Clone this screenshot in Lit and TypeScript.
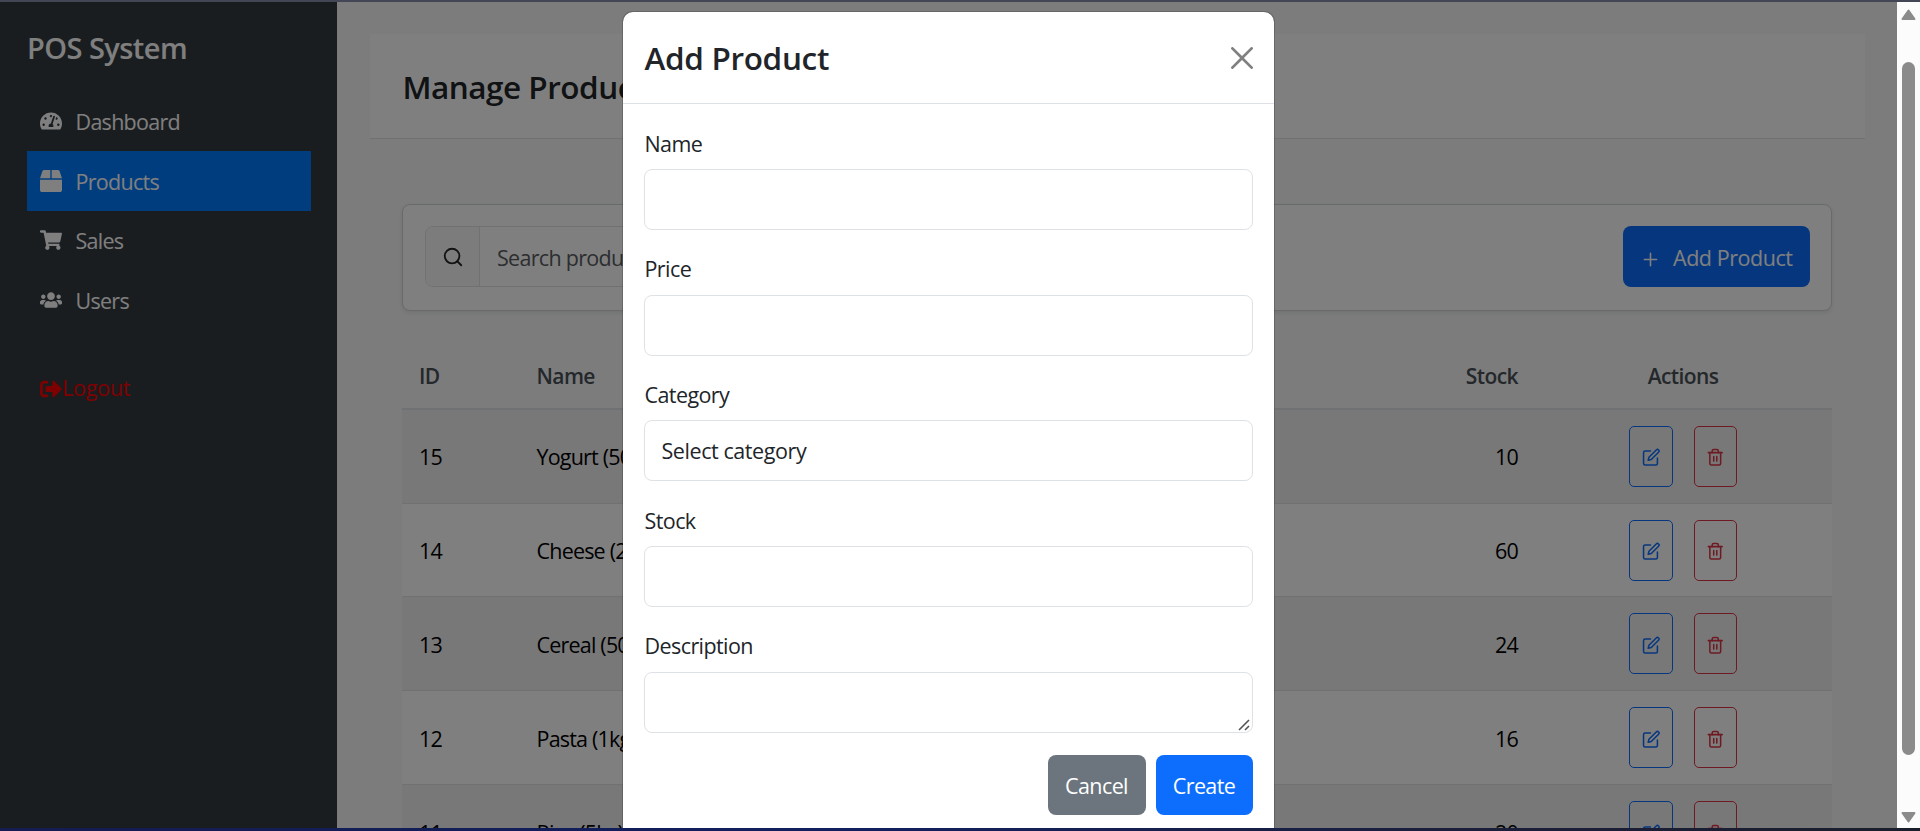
import { LitElement, html, svg, css } from "lit";
import { classMap } from "lit/directives/class-map.js";

const NAV = [
  {
    label: "Dashboard",
    box: "0 0 576 512",
    path: "M288 32C128.94 32 0 160.94 0 320c0 52.8 14.25 102.26 39.06 144.8 5.61 9.62 16.3 15.2 27.44 15.2h443c11.14 0 21.83-5.58 27.44-15.2C561.75 422.26 576 372.8 576 320c0-159.06-128.94-288-288-288zm0 64c14.71 0 26.58 10.13 30.32 23.65-1.11 2.26-2.64 4.23-3.45 6.67l-9.22 27.67c-5.13 3.49-10.97 6.01-17.64 6.01-17.67 0-32-14.33-32-32S270.33 96 288 96zM96 384c-17.67 0-32-14.33-32-32s14.33-32 32-32 32 14.33 32 32-14.33 32-32 32zm48-160c-17.67 0-32-14.33-32-32s14.33-32 32-32 32 14.33 32 32-14.33 32-32 32zm246.77-72.41l-61.33 184C343.13 347.33 352 364.54 352 384c0 11.72-3.38 22.55-8.88 32H232.88c-5.5-9.45-8.88-20.28-8.88-32 0-33.94 26.5-61.43 59.9-63.59l61.34-184.01c4.17-12.56 17.73-19.45 30.36-15.17 12.57 4.19 19.35 17.79 15.17 30.36zm14.66 57.2l15.52-46.55c3.47-1.29 7.13-2.23 11.05-2.23 17.67 0 32 14.33 32 32s-14.33 32-32 32c-11.38-.01-20.89-6.28-26.57-15.22zM480 384c-17.67 0-32-14.33-32-32s14.33-32 32-32 32 14.33 32 32-14.33 32-32 32z",
  },
  {
    label: "Products",
    active: true,
    box: "0 0 512 512",
    path: "M509.5 184.6L458.9 32.8C452.4 13.2 434.1 0 413.4 0H272v192h238.7c-.4-2.5-.4-5-1.2-7.4zM240 0H98.6c-20.7 0-39 13.2-45.5 32.8L2.5 184.6c-.8 2.4-.8 4.9-1.2 7.4H240V0zM0 224v240c0 26.5 21.5 48 48 48h416c26.5 0 48-21.5 48-48V224H0z",
  },
  {
    label: "Sales",
    box: "0 0 576 512",
    path: "M528.12 301.319l47.273-208C578.806 78.301 567.391 64 551.99 64H159.208l-9.166-44.81C147.758 8.021 137.93 0 126.529 0H24C10.745 0 0 10.745 0 24v16c0 13.255 10.745 24 24 24h69.883l70.248 343.435C147.325 417.1 136 435.222 136 456c0 30.928 25.072 56 56 56s56-25.072 56-56c0-15.674-6.447-29.835-16.824-40h209.647C430.447 426.165 424 440.326 424 456c0 30.928 25.072 56 56 56s56-25.072 56-56c0-22.172-12.888-41.332-31.579-50.405l5.517-24.276c3.413-15.018-8.002-29.319-23.403-29.319H218.117l-6.545-32h293.145c11.206 0 20.92-7.754 23.403-18.681z",
  },
  {
    label: "Users",
    box: "0 0 640 512",
    path: "M96 224c35.3 0 64-28.7 64-64s-28.7-64-64-64-64 28.7-64 64 28.7 64 64 64zm448 0c35.3 0 64-28.7 64-64s-28.7-64-64-64-64 28.7-64 64 28.7 64 64 64zm32 32h-64c-17.6 0-33.5 7.1-45.1 18.6 40.3 22.1 68.9 62 75.1 109.4h66c17.7 0 32-14.3 32-32v-32c0-35.3-28.7-64-64-64zm-256 0c61.9 0 112-50.1 112-112S381.9 32 320 32 208 82.1 208 144s50.1 112 112 112zm76.8 32h-8.3c-20.8 10-43.9 16-68.5 16s-47.6-6-68.5-16h-8.3C179.6 288 128 339.6 128 403.2V432c0 26.5 21.5 48 48 48h288c26.5 0 48-21.5 48-48v-28.8c0-63.6-51.6-115.2-115.2-115.2zm-223.7-13.4C161.5 263.1 145.6 256 128 256H64c-35.3 0-64 28.7-64 64v32c0 17.7 14.3 32 32 32h65.9c6.3-47.4 34.9-87.3 75.2-109.4z",
  },
];

const SIGN_OUT =
  "M497 273L329 441c-15 15-41 4.5-41-17v-96H152c-13.3 0-24-10.7-24-24v-96c0-13.3 10.7-24 24-24h136V88c0-21.4 25.9-32 41-17l168 168c9.3 9.4 9.3 24.6 0 34zM192 436v-40c0-6.6-5.4-12-12-12H96c-17.7 0-32-14.3-32-32V160c0-17.7 14.3-32 32-32h84c6.6 0 12-5.4 12-12V76c0-6.6-5.4-12-12-12H96c-53 0-96 43-96 96v192c0 53 43 96 96 96h84c6.6 0 12-5.4 12-12z";

const ROWS = [
  { id: 15, name: "Yogurt (500g)", stock: 10 },
  { id: 14, name: "Cheese (200g)", stock: 60 },
  { id: 13, name: "Cereal (500g)", stock: 24 },
  { id: 12, name: "Pasta (1kg)", stock: 16 },
  { id: 11, name: "Rice (5kg)", stock: 20 },
];

const EDIT = svg`<path d="M11 4H4a2 2 0 0 0-2 2v14a2 2 0 0 0 2 2h14a2 2 0 0 0 2-2v-7"/><path d="M18.5 2.5a2.121 2.121 0 0 1 3 3L12 15l-4 1 1-4 9.5-9.5z"/>`;
const TRASH = svg`<path d="M3 6h18"/><path d="M19 6v14a2 2 0 0 1-2 2H7a2 2 0 0 1-2-2V6m3 0V4a2 2 0 0 1 2-2h4a2 2 0 0 1 2 2v2"/><path d="M10 11v6M14 11v6"/>`;

class AppSidebar extends LitElement {
  static styles = css`
    :host {
      box-sizing: border-box;
      width: 337px;
      flex: none;
      padding: 0 26px 0 27px;
      background: #343a40;
      color: #fff;
      font-size: 21.5px;
      letter-spacing: -0.72px;
    }
    .brand {
      height: 89.8px;
      line-height: 92px;
      font-size: 29px;
      font-weight: 600;
      letter-spacing: -0.55px;
    }
    .item {
      display: flex;
      align-items: center;
      height: 59.4px;
      padding-left: 13px;
      gap: 13.5px;
    }
    .item.active {
      background: #007bff;
    }
    .item span {
      padding-top: 1px;
    }
    .item svg {
      width: 22px;
      height: 22px;
      fill: currentColor;
    }
    .logout {
      margin-top: 28px;
      color: red;
      gap: 0;
      letter-spacing: -0.25px;
    }
    .logout svg {
      margin-top: 4px;
    }
  `;
  render() {
    return html`
      <div class="brand">POS System</div>
      ${NAV.map(
        (n) => html`<div class=${classMap({ item: true, active: !!n.active })}>
          <svg viewBox=${n.box}><path d=${n.path}></path></svg><span>${n.label}</span>
        </div>`
      )}
      <div class="item logout">
        <svg viewBox="0 0 512 512"><path d=${SIGN_OUT}></path></svg><span>Logout</span>
      </div>
    `;
  }
}
customElements.define("app-sidebar", AppSidebar);

class ProductPage extends LitElement {
  static styles = css`
    :host {
      box-sizing: border-box;
      flex: 1;
      min-width: 0;
      overflow: hidden;
      padding: 31.5px 32px 0 33px;
      background: #f8f9fa;
      color: #212529;
    }
    .heading {
      box-sizing: border-box;
      height: 105.5px;
      line-height: 106px;
      padding-left: 32.5px;
      background: #fff;
      border-bottom: 1px solid #dee2e6;
      font-size: 31.5px;
      font-weight: 600;
      letter-spacing: -0.5px;
    }
    .body {
      padding: 65px 33px 0 32px;
    }
    .card {
      box-sizing: border-box;
      display: flex;
      justify-content: space-between;
      height: 106.5px;
      padding: 21.4px 21px;
      background: #fff;
      border: 1px solid #d3d4d5;
      border-radius: 8px;
      box-shadow: 0 2px 5px rgba(0, 0, 0, 0.09);
    }
    .search {
      box-sizing: border-box;
      display: flex;
      width: 640px;
      height: 61px;
      margin-left: 1px;
      border: 1px solid #dee2e6;
      border-radius: 8px;
      overflow: hidden;
      letter-spacing: -0.7px;
    }
    .addon {
      display: grid;
      place-items: center;
      width: 53px;
      background: #f8f9fa;
      border-right: 1px solid #dee2e6;
    }
    .placeholder {
      padding-left: 17px;
      line-height: 62px;
      color: #595c5f;
    }
    .line {
      fill: none;
      stroke: currentColor;
      stroke-width: 2;
      stroke-linecap: round;
      stroke-linejoin: round;
    }
    .glass {
      width: 22px;
      height: 22px;
    }
    .add {
      display: flex;
      align-items: center;
      box-sizing: border-box;
      width: 187px;
      height: 61px;
      padding-left: 17px;
      gap: 12px;
      border-radius: 8px;
      background: #0d6efd;
      color: #fff;
      letter-spacing: -0.45px;
      white-space: nowrap;
    }
    .add span {
      padding-top: 1.5px;
    }
    .add svg {
      width: 21px;
      height: 21px;
      margin-top: 6px;
      stroke-width: 1.8;
    }
    .table {
      margin-top: 31.1px;
      letter-spacing: -0.8px;
      color: #000;
    }
    .row {
      box-sizing: border-box;
      display: grid;
      grid-template-columns: 117.5px 718.5px 1fr 314px;
      align-items: center;
      height: 93.95px;
      padding-left: 17px;
      border-bottom: 1px solid #dee2e6;
      background: #fff;
    }
    .row > span {
      padding-top: 1.5px;
    }
    .row.odd {
      background: #f1f1f2;
    }
    .row.head {
      height: 68px;
      border-bottom: 2px solid #dee2e6;
      background: #f8f9fa;
      color: #495057;
      font-weight: 600;
      font-size: 21px;
      letter-spacing: -0.6px;
    }
    .row.head > span {
      padding-top: 3px;
    }
    .stock {
      text-align: right;
    }
    .actions {
      display: flex;
      justify-content: center;
      gap: 21px;
      padding-left: 16px;
    }
    .btn {
      box-sizing: border-box;
      display: grid;
      place-items: center;
      width: 43.5px;
      height: 61px;
      padding-top: 3px;
      border: 1px solid;
      border-radius: 5px;
    }
    .btn svg {
      width: 18.5px;
      height: 18.5px;
    }
    .edit {
      color: #0d6efd;
    }
    .del {
      color: #dc3545;
    }
  `;
  render() {
    return html`
      <div class="heading">Manage Products</div>
      <div class="body">
        <div class="card">
          <div class="search">
            <div class="addon">
              <svg class="line glass" viewBox="0 0 24 24"><circle cx="11" cy="11" r="8"></circle><path d="M21 21l-4.35-4.35"></path></svg>
            </div>
            <div class="placeholder">Search products...</div>
          </div>
          <div class="add">
            <svg class="line" viewBox="0 0 24 24"><path d="M12 5v14M5 12h14"></path></svg><span>Add Product</span>
          </div>
        </div>
        <div class="table">
          <div class="row head">
            <span>ID</span><span>Name</span><span class="stock">Stock</span><span class="actions">Actions</span>
          </div>
          ${ROWS.map(
            (r, i) => html`<div class=${classMap({ row: true, odd: i % 2 === 0 })}>
              <span>${r.id}</span><span>${r.name}</span><span class="stock">${r.stock}</span>
              <div class="actions">
                <div class="btn edit"><svg class="line" viewBox="0 0 24 24">${EDIT}</svg></div>
                <div class="btn del"><svg class="line" viewBox="0 0 24 24">${TRASH}</svg></div>
              </div>
            </div>`
          )}
        </div>
      </div>
    `;
  }
}
customElements.define("product-page", ProductPage);

class ProductModal extends LitElement {
  static styles = css`
    :host {
      box-sizing: border-box;
      width: 653px;
      height: 840px;
      background: #fff;
      background-clip: padding-box;
      border: 1px solid rgba(0, 0, 0, 0.175);
      border-radius: 11px;
      color: #212529;
      letter-spacing: -0.58px;
    }
    .header {
      display: flex;
      align-items: center;
      justify-content: space-between;
      height: 91px;
      padding: 0 21.5px;
      border-bottom: 1px solid #dee2e6;
      font-size: 31.5px;
      font-weight: 600;
      letter-spacing: -0.33px;
    }
    .close {
      width: 22px;
      height: 22px;
      fill: #808080;
    }
    .form {
      padding: 21.5px 21.5px 0 21px;
    }
    .field {
      display: flex;
      flex-direction: column;
      gap: 9.6px;
      margin-bottom: 21.1px;
    }
    .label {
      height: 34px;
      line-height: 36px;
      padding-left: 0.5px;
    }
    .control {
      box-sizing: border-box;
      display: block;
      width: 100%;
      height: 61px;
      margin: 0;
      padding: 0 16.5px;
      line-height: 60px;
      border: 1px solid #dee2e6;
      border-radius: 8px;
      background: #fff;
      letter-spacing: -0.42px;
    }
    .area {
      display: flex;
      justify-content: flex-end;
      align-items: flex-end;
      padding: 0 2px 1px;
    }
    .grip {
      width: 12px;
      height: 12px;
      stroke: #555;
      stroke-width: 1.6;
    }
    .footer {
      display: flex;
      justify-content: flex-end;
      gap: 10px;
      padding-top: 0.6px;
    }
    .btn {
      width: 98px;
      height: 60.5px;
      line-height: 62px;
      border-radius: 8px;
      text-align: center;
      color: #fff;
      background: #6c757d;
      letter-spacing: -0.6px;
    }
    .primary {
      width: 97px;
      background: #0d6efd;
    }
  `;
  render() {
    return html`
      <div class="header">
        <span>Add Product</span>
        <svg class="close" viewBox="0 0 16 16"><path d="M.293.293a1 1 0 0 1 1.414 0L8 6.586 14.293.293a1 1 0 1 1 1.414 1.414L9.414 8l6.293 6.293a1 1 0 0 1-1.414 1.414L8 9.414l-6.293 6.293a1 1 0 0 1-1.414-1.414L6.586 8 .293 1.707a1 1 0 0 1 0-1.414z"></path></svg>
      </div>
      <div class="form">
        <div class="field"><div class="label">Name</div><div class="control"></div></div>
        <div class="field"><div class="label">Price</div><div class="control"></div></div>
        <div class="field"><div class="label">Category</div><div class="control">Select category</div></div>
        <div class="field"><div class="label">Stock</div><div class="control"></div></div>
        <div class="field">
          <div class="label">Description</div>
          <div class="control area">
            <svg class="grip" viewBox="0 0 12 12"><path d="M1 11L11 1M7 11l4-4"></path></svg>
          </div>
        </div>
        <div class="footer">
          <div class="btn">Cancel</div>
          <div class="btn primary">Create</div>
        </div>
      </div>
    `;
  }
}
customElements.define("product-modal", ProductModal);

class AppRoot extends LitElement {
  static styles = css`
    :host {
      display: flex;
      flex-direction: column;
      width: 1920px;
      height: 831px;
      overflow: hidden;
      font-family: "Open Sans", "Noto Sans", sans-serif;
      font-size: 21.5px;
    }
    .top {
      flex: none;
      height: 2px;
      background: #434654;
    }
    .bottom {
      flex: none;
      height: 3px;
      background: linear-gradient(90deg, #141c50, #12205f 45%, #1b1f3c 75%, #1b1e2b);
    }
    .view {
      flex: 1;
      display: flex;
      min-height: 0;
    }
    .app {
      position: relative;
      flex: 1;
      display: flex;
      min-width: 0;
      overflow: hidden;
    }
    .backdrop {
      position: absolute;
      inset: 0;
      display: flex;
      justify-content: center;
      align-items: flex-start;
      padding-top: 9px;
      background: rgba(0, 0, 0, 0.5);
    }
    .scroll {
      box-sizing: border-box;
      flex: none;
      display: flex;
      flex-direction: column;
      align-items: center;
      width: 23px;
      padding: 7px 0 5px;
      background: #fcfcfc;
    }
    .arrow {
      width: 15px;
      height: 11px;
      fill: #8b8b8b;
      stroke: #8b8b8b;
      stroke-width: 2;
      stroke-linejoin: round;
    }
    .track {
      flex: 1;
      padding: 42px 0 57px;
      display: flex;
    }
    .thumb {
      width: 13px;
      border-radius: 7px;
      background: #8b8b8b;
    }
  `;
  render() {
    return html`
      <div class="top"></div>
      <div class="view">
        <div class="app">
          <app-sidebar></app-sidebar>
          <product-page></product-page>
          <div class="backdrop"><product-modal></product-modal></div>
        </div>
        <div class="scroll">
          <svg class="arrow" viewBox="0 0 15 11"><path d="M7.5 1.5L13.5 10h-12z"></path></svg>
          <div class="track"><div class="thumb"></div></div>
          <svg class="arrow" viewBox="0 0 15 11"><path d="M7.5 9.5L13.5 1h-12z"></path></svg>
        </div>
      </div>
      <div class="bottom"></div>
    `;
  }
}
customElements.define("app-root", AppRoot);
